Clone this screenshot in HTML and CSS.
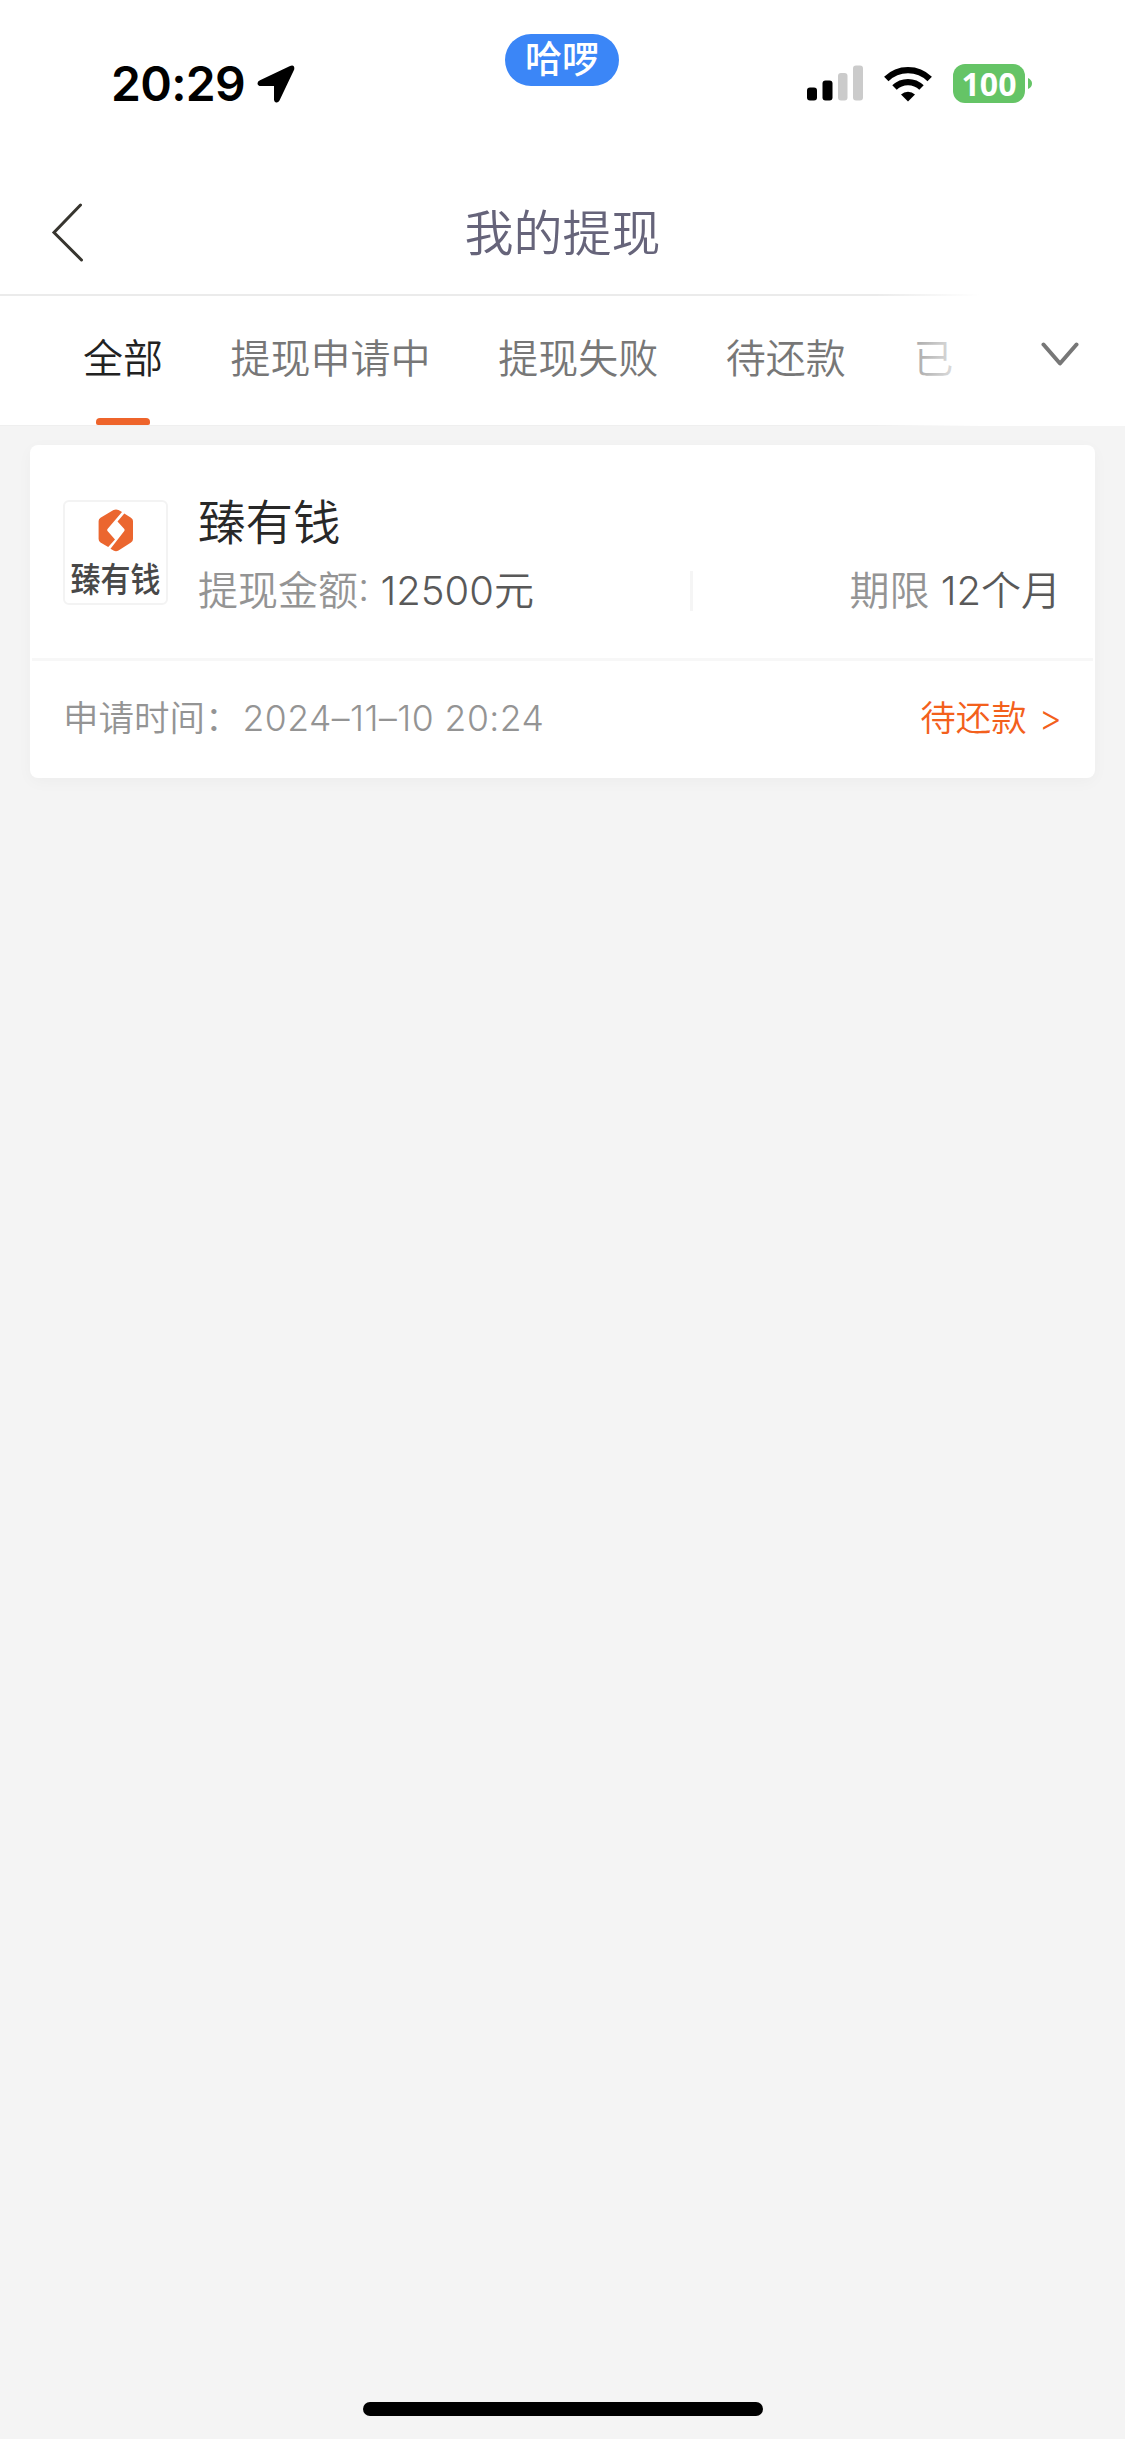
FILE: index.html
```html
<!DOCTYPE html>
<html lang="zh-CN">
<head>
<meta charset="utf-8">
<title>我的提现</title>
<link rel="stylesheet" href="styles.css">
</head>
<body>
<div class="screen">
  <header class="status">
    <div class="clock">
      <span class="time">20:29</span>
      <svg class="arrow" width="38" height="38" viewBox="0 0 38 38"><path d="M3 15.200 32.500 1.200Q38-1 37.200 4.600L22.500 35.500Q21 38 18.500 37.200Q17 36.500 17 34.500V21H4Q.5 21 .5 18.200Q.6 16.300 3 15.200Z"/></svg>
    </div>
    <div class="pill">哈啰</div>
    <div class="indicators">
      <svg width="56" height="36" viewBox="0 0 56 36"><rect y="22.500" width="10" height="13" rx="3"/><rect x="15.500" y="15.500" width="10" height="20" rx="3"/><g fill="#cbcbcb"><rect x="31" y="8" width="9.500" height="27.500" rx="3"/><rect x="46" y=".5" width="10" height="35" rx="3"/></g></svg>
      <svg class="wifi" width="48" height="36" viewBox="0 0 48 36"><g fill="none" stroke="#000" stroke-width="6.300"><path d="M2.300 13A31 31 0 0 1 45.700 13"/><path d="M10.500 21.600A19.200 19.200 0 0 1 37.500 21.600"/></g><path d="M24 35.500 17 28.500A10.500 10.500 0 0 1 31 28.500Z"/></svg>
      <div class="battery">100</div>
      <svg class="nub" width="4" height="11" viewBox="0 0 4 11"><path d="M0 0Q4 2 4 5.500T0 11Z" fill="#65c466"/></svg>
    </div>
  </header>
  <nav class="navbar">
    <svg class="back" width="34" height="60" viewBox="0 0 34 60"><path d="M29.500 3 3 30.500 30.500 58" /></svg>
    <h1 class="title">我的提现</h1>
  </nav>
  <div class="tabs">
    <span class="tab active">全部</span>
    <span class="tab">提现申请中</span>
    <span class="tab">提现失败</span>
    <span class="tab">待还款</span>
    <span class="tab">已</span>
    <div class="more"><svg width="38" height="25" viewBox="0 0 38 25"><path d="M2.500 2.500 19 21.500 35.500 2.500"/></svg></div>
  </div>
  <main class="list">
    <article class="card">
      <div class="summary">
        <div class="logo">
          <svg width="36" height="43" viewBox="0 0 36 43"><path fill="#eb662f" d="M15.500 1Q18 0 20.500 1L24 3 9.500 20Q8.800 21 9.500 22L17 30.500 10.200 38 2.500 33.500Q.6 32.300.6 30V12Q.6 10 2.500 8.800ZM26.300 4.500 33 8.800Q35 10 35 12V30Q35 32.300 33 33.500L20.500 41.500Q18 43 15.500 41.500L12.500 39.800 26.300 22Q27 21 26.300 20L19.500 12.500Z"/></svg>
          <span>臻有钱</span>
        </div>
        <div class="info">
          <h2 class="name">臻有钱</h2>
          <div class="terms">
            <p class="amount">提现金额: <b>12500元</b></p>
            <p class="period">期限 <b>12个月</b></p>
          </div>
        </div>
      </div>
      <div class="footer">
        <p>申请时间：<time class="applied">2024–11–10 20:24</time></p>
        <p class="state">待还款 <span>&gt;</span></p>
      </div>
    </article>
  </main>
  <div class="home"></div>
</div>
</body>
</html>
```

FILE: styles.css
```css
* { box-sizing: border-box; margin: 0; padding: 0; }
body {
  font-family: Inter, "Noto Sans CJK SC", sans-serif;
  font-weight: 350;
  background: #f4f4f4;
}
svg { display: block; flex: none; }
.screen { width: 1125px; height: 2439px; display: flex; flex-direction: column; }
.status {
  height: 170px;
  background: #fff;
  display: grid;
  grid-template-columns: 505px 114px 1fr;
  align-items: start;
}
.clock { display: flex; padding: 54px 0 0 111px; }
.time { width: 146px; font-size: 48px; font-weight: 600; line-height: 60px; letter-spacing: -.7px; white-space: nowrap; }
.arrow { margin-top: 11px; }
.pill {
  height: 52px;
  margin-top: 34px;
  border-radius: 26px;
  background: #3b86f7;
  color: #fff;
  font-size: 37px;
  font-weight: 500;
  line-height: 52px;
  text-align: center;
}
.indicators { display: flex; align-items: flex-start; padding: 65px 0 0 188px; }
.wifi { margin: 1px 21px 0; }
.battery {
  width: 72px;
  height: 39px;
  margin-top: -1px;
  border-radius: 12px;
  background: #65c466;
  color: #fff;
  font: 700 32px/39px "Noto Sans", sans-serif;
  text-align: center;
}
.nub { margin: 13px 0 0 3px; }
.navbar {
  height: 126px;
  background: #fff;
  border-bottom: 2px solid #ebebeb;
  display: grid;
  grid-template-columns: 51px 34px 1fr 85px;
  align-items: center;
}
.back { grid-column: 2; fill: none; stroke: #37352f; stroke-width: 3; stroke-linecap: round; }
.title { padding-top: 3px; color: #66647a; font-size: 49px; font-weight: 350; line-height: 72px; text-align: center; }
.tabs {
  position: relative;
  height: 130px;
  padding-left: 83px;
  background: #fff;
  border-bottom: 1px solid #efefef;
  display: flex;
  gap: 67.600px;
  color: #777;
  font-size: 40px;
  line-height: 126px;
  white-space: nowrap;
}
.active { display: flex; flex-direction: column; align-items: center; color: #222; }
.active::after { content: ""; width: 54px; height: 8px; margin-top: -4px; border-radius: 4px 4px 2px 2px; background: #ee642b; }
.more {
  position: absolute;
  top: -2px;
  right: 0;
  width: 250px;
  height: 132px;
  padding: 48px 0 0 166px;
  background: linear-gradient(90deg, #fff0, #fff 42%);
}
.more path { fill: none; stroke: #777; stroke-width: 4; stroke-linecap: round; stroke-linejoin: round; }
.list { flex: 1; padding: 19px 30px; }
.card { height: 333px; border-radius: 8px; background: #fff; box-shadow: 0 4px 16px #00000008; }
.summary {
  height: 216px;
  margin: 0 2px;
  padding: 45px 32px 0 31px;
  border-bottom: 3px solid #f7f7f7;
  display: flex;
  gap: 30px;
}
.logo {
  width: 105px;
  height: 105px;
  margin-top: 10px;
  border: 2px solid #f3f3f3;
  border-radius: 6px;
  display: flex;
  flex-direction: column;
  align-items: center;
  padding-top: 7px;
  color: #484848;
  font-size: 30px;
  font-weight: 500;
  line-height: 54px;
}
.logo span { transform: scaleY(1.150); }
.info { flex: 1; }
.name { color: #282828; font-size: 47.500px; font-weight: 350; line-height: 66px; }
.terms { display: flex; justify-content: space-between; margin-top: 15px; color: #949494; font-size: 40px; line-height: 40px; white-space: nowrap; }
.terms b { color: #595959; font-weight: 350; }
.period { width: 371px; border-left: 3px solid #f5f5f5; text-align: right; }
.footer { height: 117px; padding: 0 33px; display: flex; justify-content: space-between; color: #949494; font-size: 35.500px; line-height: 116px; white-space: nowrap; }
.applied { margin-left: 2px; letter-spacing: .5px; }
.state { color: #f3601c; word-spacing: 2px; }
.home { width: 400px; height: 14px; margin: 0 auto 23px; border-radius: 7px; background: #000; }
```
